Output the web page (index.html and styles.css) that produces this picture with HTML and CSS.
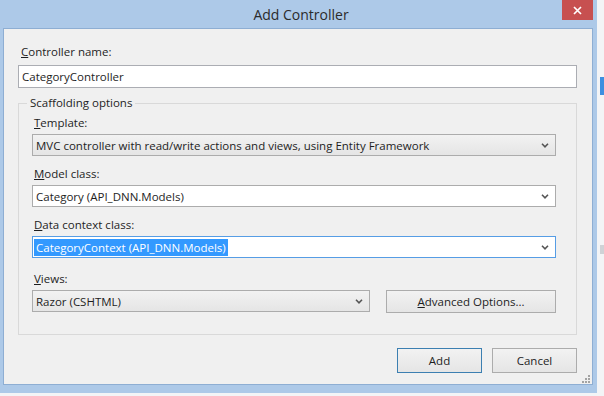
FILE: index.html
```html
<!DOCTYPE html>
<html lang="en">
<head>
    <meta charset="UTF-8">
    <title>Add Controller</title>
    <link rel="stylesheet" href="styles.css">
</head>
<body>
    <div class="window">
        <div class="titlebar">
            <span class="title">Add Controller</span>
            <button type="button" class="close-button">
                <svg width="9" height="9" viewBox="0 0 9 9"><path d="M1 1 L8 8 M8 1 L1 8" stroke="#fff" stroke-width="1.7" fill="none"/></svg>
            </button>
        </div>

        <div class="client">
            <div class="field-label top-label"><u>C</u>ontroller name:</div>
            <div class="textbox">CategoryController</div>

            <fieldset class="group">
                <legend>Scaffolding options</legend>

                <div class="row">
                    <div class="field-label"><u>T</u>emplate:</div>
                    <div class="combo combo-button">
                        <span class="value">MVC controller with read/write actions and views, using Entity Framework</span>
                        <svg class="chevron" width="8" height="5" viewBox="0 0 8 5"><path d="M1 0.8 L4 3.8 L7 0.8" stroke="#555" stroke-width="1.6" fill="none"/></svg>
                    </div>
                </div>

                <div class="row">
                    <div class="field-label"><u>M</u>odel class:</div>
                    <div class="combo">
                        <span class="value">Category (API_DNN.Models)</span>
                        <svg class="chevron" width="8" height="5" viewBox="0 0 8 5"><path d="M1 0.8 L4 3.8 L7 0.8" stroke="#555" stroke-width="1.6" fill="none"/></svg>
                    </div>
                </div>

                <div class="row">
                    <div class="field-label"><u>D</u>ata context class:</div>
                    <div class="combo focused">
                        <span class="value"><span class="selected">CategoryContext (API_DNN.Models)</span></span>
                        <svg class="chevron" width="8" height="5" viewBox="0 0 8 5"><path d="M1 0.8 L4 3.8 L7 0.8" stroke="#555" stroke-width="1.6" fill="none"/></svg>
                    </div>
                </div>

                <div class="row views-row">
                    <div class="field-label"><u>V</u>iews:</div>
                    <div class="views-line">
                        <div class="combo combo-button views-combo">
                            <span class="value">Razor (CSHTML)</span>
                            <svg class="chevron" width="8" height="5" viewBox="0 0 8 5"><path d="M1 0.8 L4 3.8 L7 0.8" stroke="#555" stroke-width="1.6" fill="none"/></svg>
                        </div>
                        <button type="button" class="btn advanced-button"><u>A</u>dvanced Options...</button>
                    </div>
                </div>
            </fieldset>

            <div class="actions">
                <button type="button" class="btn btn-default">Add</button>
                <button type="button" class="btn">Cancel</button>
            </div>

            <!-- resize grip -->
            <svg class="grip" width="8" height="8" viewBox="0 0 8 8" fill="#a3a3a3">
                <rect x="6" y="0" width="2" height="2"/>
                <rect x="3" y="3" width="2" height="2"/>
                <rect x="6" y="3" width="2" height="2"/>
                <rect x="0" y="6" width="2" height="2"/>
                <rect x="3" y="6" width="2" height="2"/>
                <rect x="6" y="6" width="2" height="2"/>
            </svg>
        </div>
    </div>

    <div class="side">
        <div class="side-blue"></div>
        <div class="side-grey"></div>
    </div>
</body>
</html>
```

FILE: styles.css
```css
body {
    margin: 0;
    font-family: "Open Sans", "Noto Sans", sans-serif;
    font-size: 11.5px;
    color: #1e1e1e;
    background-color: #f3f4f6;
    display: flex;
}

.window {
    width: 597px;
    height: 393px;
    box-sizing: border-box;
    flex-shrink: 0;
    background-color: #adc9e8;
    padding: 0 4px 8px 3px;
    display: flex;
    flex-direction: column;
}

.titlebar {
    height: 29px;
    position: relative;
    display: flex;
    align-items: center;
    justify-content: center;
}

.title {
    font-size: 14px;
    color: #2b2b2b;
    margin-left: 6px;
}

.close-button {
    position: absolute;
    top: 0;
    right: 0;
    width: 31px;
    height: 20px;
    padding: 0;
    border: none;
    background-color: #c75050;
    display: flex;
    align-items: center;
    justify-content: center;
}

.client {
    flex: 1;
    position: relative;
    display: flex;
    flex-direction: column;
    background-color: #f0f0f0;
    border: 1px solid #8eaed3;
    padding: 15px 15px 11px 14px;
}

.field-label {
    height: 16px;
    line-height: 16px;
    margin-bottom: 3px;
    padding-left: 2px;
}

.top-label {
    margin-bottom: 5px;
    padding-left: 3px;
}

.textbox {
    height: 23px;
    box-sizing: border-box;
    line-height: 21px;
    border: 1px solid #abadb3;
    background-color: #fff;
    padding: 0 3px;
}

.group {
    margin: 7px 0 0;
    padding: 4px 20px 21px 13px;
    border: 1px solid #d9d9d9;
    min-width: 0;
}

.group legend {
    padding: 0 3px;
    margin-left: -5px;
    line-height: 16px;
}

.row + .row {
    margin-top: 10px;
}

.row.views-row {
    margin-top: 13px;
}

.combo {
    height: 22px;
    box-sizing: border-box;
    display: flex;
    align-items: center;
    border: 1px solid #acacac;
    background-color: #fff;
    padding: 0 6px 0 3px;
}

.combo .value {
    flex: 1;
    white-space: nowrap;
}

.combo-button {
    background: linear-gradient(#f2f2f2, #e5e5e5);
}

.combo.focused {
    border-color: #569de5;
    padding-left: 1px;
}

.selected {
    background-color: #3399ff;
    color: #fff;
    padding: 1px 2px;
}

.views-line {
    display: flex;
    justify-content: space-between;
    align-items: flex-start;
}

.views-combo {
    width: 338px;
}

.btn {
    font: inherit;
    color: #1e1e1e;
    height: 23px;
    padding: 0;
    border: 1px solid #acacac;
    background: linear-gradient(#f2f2f2, #e5e5e5);
}

.advanced-button {
    width: 170px;
}

.actions {
    display: flex;
    justify-content: flex-end;
    gap: 10px;
    margin-top: 13px;
}

.actions .btn {
    width: 85px;
    height: 25px;
}

.btn-default {
    border-color: #3c7fb1;
}

.grip {
    position: absolute;
    right: 2px;
    bottom: 1px;
}

.side {
    flex: 1;
}

.side-blue {
    margin: 77px 0 0 3px;
    height: 18px;
    background-color: #3d8fe0;
}

.side-grey {
    margin: 150px 0 0 3px;
    height: 9px;
    background-color: #cfd2d6;
}
```
